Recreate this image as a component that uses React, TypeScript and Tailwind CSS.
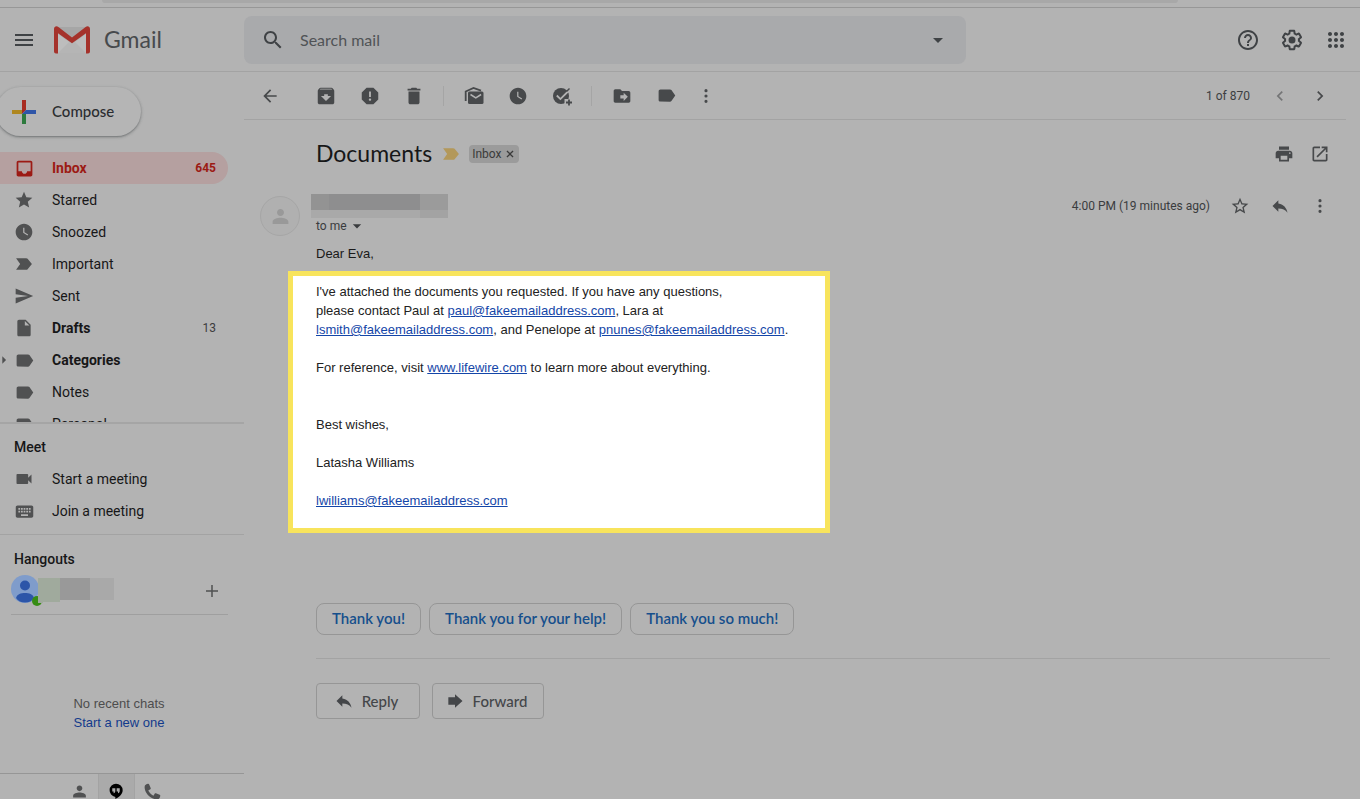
import React from 'react';

// 24x24 glyphs, all drawn with currentColor
const ICONS = {
  menu: 'M3 18h18v-2H3v2zm0-5h18v-2H3v2zm0-7v2h18V6H3z',
  search: 'M15.5 14h-.79l-.28-.27C15.41 12.59 16 11.11 16 9.5 16 5.91 13.09 3 9.5 3S3 5.91 3 9.5 5.91 16 9.5 16c1.61 0 3.09-.59 4.23-1.57l.27.28v.79l5 4.99L20.49 19l-4.99-5zm-6 0C7.01 14 5 11.99 5 9.5S7.01 5 9.5 5 14 7.01 14 9.5 11.99 14 9.5 14z',
  dropDown: 'M7 10l5 5 5-5z',
  help: 'M11 18h2v-2h-2v2zm1-16C6.48 2 2 6.48 2 12s4.48 10 10 10 10-4.48 10-10S17.52 2 12 2zm0 18c-4.41 0-8-3.59-8-8s3.59-8 8-8 8 3.59 8 8-3.59 8-8 8zm0-14c-2.21 0-4 1.79-4 4h2c0-1.1.9-2 2-2s2 .9 2 2c0 2-3 1.75-3 5h2c0-2.25 3-2.5 3-5 0-2.21-1.79-4-4-4z',
  settings: 'M13.85 22.25h-3.7c-.74 0-1.36-.54-1.45-1.27l-.27-1.89c-.27-.14-.53-.29-.79-.46l-1.8.72c-.7.26-1.47-.03-1.81-.65L2.2 15.53c-.35-.66-.2-1.44.36-1.88l1.53-1.19c-.01-.15-.02-.3-.02-.46 0-.15.01-.31.02-.46l-1.52-1.19c-.59-.45-.74-1.26-.37-1.88l1.85-3.19c.34-.62 1.11-.9 1.79-.63l1.81.73c.26-.17.52-.32.78-.46l.27-1.91c.09-.7.71-1.25 1.44-1.25h3.7c.74 0 1.36.54 1.45 1.27l.27 1.89c.27.14.53.29.79.46l1.8-.72c.71-.26 1.48.03 1.82.65l1.84 3.18c.36.66.2 1.44-.36 1.88l-1.52 1.19c.01.15.02.3.02.46s-.01.31-.02.46l1.52 1.19c.56.45.72 1.23.37 1.86l-1.86 3.22c-.34.62-1.11.9-1.8.63l-1.8-.72c-.26.17-.52.32-.78.46l-.27 1.91c-.1.68-.72 1.22-1.46 1.22zm-3.23-2h2.76l.37-2.55.53-.22c.44-.18.88-.44 1.34-.78l.45-.34 2.38.96 1.38-2.4-2.03-1.58.07-.56c.03-.26.06-.51.06-.78s-.03-.53-.06-.78l-.07-.56 2.03-1.58-1.39-2.4-2.39.96-.45-.35c-.42-.32-.87-.58-1.33-.77l-.52-.22-.37-2.55h-2.76l-.37 2.55-.53.21c-.44.19-.88.44-1.34.79l-.45.33-2.38-.95-1.39 2.39 2.03 1.58-.07.56a7 7 0 0 0-.06.79c0 .26.02.53.06.78l.07.56-2.03 1.58 1.38 2.4 2.39-.96.45.35c.43.33.86.58 1.33.77l.53.22.38 2.55zM12 8.5a3.5 3.5 0 1 1 0 7 3.5 3.5 0 0 1 0-7z',
  apps: 'M6 8c1.1 0 2-.9 2-2s-.9-2-2-2-2 .9-2 2 .9 2 2 2zm6 12c1.1 0 2-.9 2-2s-.9-2-2-2-2 .9-2 2 .9 2 2 2zm-6 0c1.1 0 2-.9 2-2s-.9-2-2-2-2 .9-2 2 .9 2 2 2zm0-6c1.1 0 2-.9 2-2s-.9-2-2-2-2 .9-2 2 .9 2 2 2zm6 0c1.1 0 2-.9 2-2s-.9-2-2-2-2 .9-2 2 .9 2 2 2zm4-8c0 1.1.9 2 2 2s2-.9 2-2-.9-2-2-2-2 .9-2 2zm-4 2c1.1 0 2-.9 2-2s-.9-2-2-2-2 .9-2 2 .9 2 2 2zm6 6c1.1 0 2-.9 2-2s-.9-2-2-2-2 .9-2 2 .9 2 2 2zm0 6c1.1 0 2-.9 2-2s-.9-2-2-2-2 .9-2 2 .9 2 2 2z',
  back: 'M20 11H7.83l5.59-5.59L12 4l-8 8 8 8 1.41-1.41L7.83 13H20v-2z',
  archive: 'M20.54 5.23l-1.39-1.68C18.88 3.21 18.47 3 18 3H6c-.47 0-.88.21-1.16.55L3.46 5.23C3.17 5.57 3 6.02 3 6.5V19c0 1.1.9 2 2 2h14c1.1 0 2-.9 2-2V6.5c0-.48-.17-.93-.46-1.27zM12 17.5L6.5 12H10v-2h4v2h3.5L12 17.5zM5.12 5l.81-1h12l.94 1H5.12z',
  report: 'M15.73 3H8.27L3 8.27v7.46L8.27 21h7.46L21 15.73V8.27L15.73 3zM12 17.3c-.72 0-1.3-.58-1.3-1.3s.58-1.3 1.3-1.3 1.3.58 1.3 1.3-.58 1.3-1.3 1.3zm1-4.3h-2V7h2v6z',
  trash: 'M6 19c0 1.1.9 2 2 2h8c1.1 0 2-.9 2-2V7H6v12zM19 4h-3.5l-1-1h-5l-1 1H5v2h14V4z',
  clock: 'M12 2C6.5 2 2 6.5 2 12s4.5 10 10 10 10-4.5 10-10S17.5 2 12 2zm4.2 14.2L11 13V7h1.5v5.2l4.5 2.7-.8 1.3z',
  moveTo: 'M20 6h-8l-2-2H4c-1.1 0-1.99.9-1.99 2L2 18c0 1.1.9 2 2 2h16c1.1 0 2-.9 2-2V8c0-1.1-.9-2-2-2zm-6 12v-3h-4v-4h4V8l5 5-5 5z',
  label: 'M17.63 5.84C17.27 5.33 16.67 5 16 5L5 5.01C3.9 5.01 3 5.9 3 7v10c0 1.1.9 1.99 2 1.99L16 19c.67 0 1.27-.33 1.63-.84L22 12l-4.37-6.16z',
  more: 'M12 7.500a1.900 1.900 0 1 0 0-3.800 1.900 1.900 0 0 0 0 3.800zm0 6.400a1.900 1.900 0 1 0 0-3.800 1.900 1.900 0 0 0 0 3.800zm0 6.400a1.900 1.900 0 1 0 0-3.800 1.900 1.900 0 0 0 0 3.800z',
  prev: 'M15.41 7.41L14 6l-6 6 6 6 1.41-1.41L10.83 12z',
  next: 'M10 6L8.59 7.41 13.17 12l-4.58 4.59L10 18l6-6z',
  inbox: 'M19 3H4.99c-1.11 0-1.98.89-1.98 2L3 19c0 1.1.88 2 1.99 2H19c1.1 0 2-.9 2-2V5c0-1.11-.9-2-2-2zm0 12h-4c0 1.66-1.35 3-3 3s-3-1.34-3-3H4.99V5H19v10z',
  star: 'M12 17.27L18.18 21l-1.64-7.03L22 9.24l-7.19-.61L12 2 9.19 8.63 2 9.24l5.46 4.73L5.82 21z',
  starOutline: 'M22 9.24l-7.19-.62L12 2 9.19 8.63 2 9.24l5.46 4.73L5.82 21 12 17.27 18.18 21l-1.63-7.03L22 9.24zM12 15.4l-3.76 2.27 1-4.28-3.32-2.88 4.38-.38L12 6.1l1.71 4.04 4.38.38-3.32 2.88 1 4.28L12 15.4z',
  important: 'M2.5 19h12.2c.7 0 1.3-.33 1.65-.84L21.5 12l-5.15-6.16C16 5.33 15.4 5 14.7 5H2.5l4.9 7z',
  send: 'M2.01 21L23 12 2.01 3 2 10l15 2-15 2z',
  draft: 'M6 2c-1.1 0-1.99.9-1.99 2L4 20c0 1.1.89 2 1.99 2H18c1.1 0 2-.9 2-2V8l-6-6H6zm7 7V3.5L18.5 9H13z',
  camera: 'M17 10.5V7c0-.55-.45-1-1-1H4c-.55 0-1 .45-1 1v10c0 .55.45 1 1 1h12c.55 0 1-.45 1-1v-3.5l4 4v-11l-4 4z',
  keyboard: 'M20 5H4c-1.1 0-1.99.9-1.99 2L2 17c0 1.1.9 2 2 2h16c1.1 0 2-.9 2-2V7c0-1.1-.9-2-2-2zm-9 3h2v2h-2V8zm0 3h2v2h-2v-2zM8 8h2v2H8V8zm0 3h2v2H8v-2zm-1 2H5v-2h2v2zm0-3H5V8h2v2zm9 7H8v-2h8v2zm0-4h-2v-2h2v2zm0-3h-2V8h2v2zm3 3h-2v-2h2v2zm0-3h-2V8h2v2z',
  add: 'M20 13h-7v7h-2v-7H4v-2h7V4h2v7h7v2z',
  person: 'M12 11.500c2.210 0 4-1.790 4-4s-1.790-4-4-4-4 1.790-4 4 1.790 4 4 4zm0 2c-3.500 0-9 1.500-9 4.500v2.500h18V18c0-3-5.500-4.500-9-4.500z',
  phone: 'M6.620 10.790c1.440 2.830 3.760 5.140 6.590 6.590l1.700-2.700c.4-.5.9-.6 1.400-.4l4.700 1.900c.6.300.9.700.8 1.400-.3 2-1.500 4.400-4 4.400C9.900 22 2 14.100 2 6.200 2 3.700 4.400 2.500 6.400 2.200c.7-.1 1.100.200 1.400.8l1.900 4.700c.2.500.1 1-.4 1.400z',
  hangouts: 'M12 1a10 10 0 0 0-1 19.900V24c5.500-2.600 11-7.200 11-13A10 10 0 0 0 12 1zM11 11.500c0 2.200-1 3.600-2.600 4v-2.700h-2V7.800H11zm6.600 0c0 2.200-1 3.600-2.600 4v-2.700h-2V7.800h4.600z',
  print: 'M19 8H5c-1.66 0-3 1.34-3 3v6h4v4h12v-4h4v-6c0-1.66-1.34-3-3-3zm-3 11H8v-5h8v5zm3-7c-.55 0-1-.45-1-1s.45-1 1-1 1 .45 1 1-.45 1-1 1zm-1-9H6v4h12V3z',
  openNew: 'M19 19H5V5h7V3H5c-1.11 0-2 .9-2 2v14c0 1.1.89 2 2 2h14c1.1 0 2-.9 2-2v-7h-2v7zM14 3v2h3.59l-9.83 9.83 1.41 1.41L19 6.41V10h2V3h-7z',
  reply: 'M10 9V5l-7 7 7 7v-4.1c5 0 8.5 1.6 11 5.1-1-5-4-10-11-11z',
  forward: 'M12 7.500V4l9 8-9 8v-3.500H4v-9z',
  close: 'M19 6.8L17.2 5 12 10.2 6.8 5 5 6.8l5.2 5.2L5 17.2 6.8 19l5.2-5.2 5.2 5.2 1.8-1.8-5.2-5.2z',
  caretRight: 'M8 3l9 9-9 9z',
};

type IconName = keyof typeof ICONS;

const Icon = ({ name, size = 20, className = '' }: { name: IconName; size?: number; className?: string }) => (
  <svg width={size} height={size} viewBox="0 0 24 24" fill="currentColor" fillRule="evenodd" className={`shrink-0 ${className}`} aria-hidden="true">
    <path d={ICONS[name]} />
  </svg>
);

const GmailLogo = () => (
  <svg width="36" height="28" viewBox="0 0 36 28" aria-hidden="true">
    <rect x="1" y="1" width="34" height="26" rx="2" fill="#b0b0b0" />
    <path d="M4 27V8l14 10L32 8v19z" fill="#bdbdbd" />
    <path d="M4 27l11-11 3 2 3-2 11 11z" fill="#b5b5b5" />
    <path d="M4 1h28L18 13z" fill="#a6a6a6" />
    <path d="M0 3C0 .5 2.5-.4 4.4 1L18 11.400 31.600 1C33.500-.4 36 .5 36 3v22.500a2 2 0 0 1-2 2h-2V7.200L18 17.300 4 7.200v20.300H2a2 2 0 0 1-2-2z" fill="#a5322b" />
  </svg>
);

const ComposePlus = () => (
  <svg width="24" height="24" viewBox="0 0 24 24" aria-hidden="true">
    <path d="M10 0h4v10h-4z" fill="#a82b20" />
    <path d="M0 10h10v4H0z" fill="#af8720" />
    <path d="M14 10h10v4H14z" fill="#2f56a8" />
    <path d="M10 14h4v10h-4z" fill="#2d7a3d" />
    <path d="M10 10h4l-4 4z" fill="#a82b20" />
    <path d="M14 10v4h-4z" fill="#2f56a8" />
  </svg>
);

const MarkUnreadIcon = () => (
  <svg width="20" height="20" viewBox="0 0 20 20" fill="none" aria-hidden="true">
    <path d="M1.700 15V5.500L9.500 2 17 4.600" stroke="currentColor" strokeWidth="1.800" />
    <rect x="4" y="5.500" width="15.500" height="12.500" rx="1.500" fill="currentColor" />
    <path d="M6.500 8.500l5.300 3.300 5.300-3.300" stroke="#b3b3b3" strokeWidth="1.500" />
  </svg>
);

const AddTaskIcon = () => (
  <svg width="20" height="20" viewBox="0 0 20 20" fill="none" aria-hidden="true">
    <circle cx="9" cy="10" r="8" fill="currentColor" />
    <path d="M4.800 9.500l3.600 3.600L17 4.500" stroke="#b3b3b3" strokeWidth="1.800" />
    <path d="M14.500 5.500l3-3" stroke="currentColor" strokeWidth="1.500" />
    <path d="M12.500 13h7v7h-7z" fill="#b3b3b3" />
    <path d="M17 13.500v6M14 16.500h6" stroke="currentColor" strokeWidth="1.800" />
  </svg>
);

const HangoutsAvatar = () => (
  <svg width="32" height="32" viewBox="0 0 32 32" aria-hidden="true">
    <circle cx="14" cy="14" r="14" fill="#7f9ccb" />
    <circle cx="14" cy="10.500" r="5" fill="#2c55a8" />
    <path d="M5 23c1-4 5-5 9-5s8 1 9 5c-2 3-5 4.500-9 4.500S7 26 5 23z" fill="#2c55a8" />
    <circle cx="26" cy="26" r="5" fill="#368c14" />
    <path d="M27 20h5v8h-5z" fill="#a0aa9d" />
  </svg>
);

interface IconButtonProps {
  label: string;
  className?: string;
  children: React.ReactNode;
}

const IconButton = ({ label, className = 'h-10 w-11', children }: IconButtonProps) => (
  <button type="button" aria-label={label} className={`flex shrink-0 items-center justify-center ${className}`}>
    {children}
  </button>
);

interface Folder {
  name: string;
  icon: IconName;
  size: number;
  count?: string;
  active?: boolean;
  bold?: boolean;
  expandable?: boolean;
}

const FOLDERS: Folder[] = [
  { name: 'Inbox', icon: 'inbox', size: 21, count: '645', active: true },
  { name: 'Starred', icon: 'star', size: 20 },
  { name: 'Snoozed', icon: 'clock', size: 20 },
  { name: 'Important', icon: 'important', size: 20 },
  { name: 'Sent', icon: 'send', size: 20 },
  { name: 'Drafts', icon: 'draft', size: 20, count: '13', bold: true },
  { name: 'Categories', icon: 'label', size: 21, bold: true, expandable: true },
  { name: 'Notes', icon: 'label', size: 21 },
  { name: 'Personal', icon: 'label', size: 21 },
];

const FolderRow = ({ folder }: { folder: Folder }) => {
  const tone = folder.active
    ? 'bg-[#b5a0a0] font-bold text-[#9c1a14]'
    : folder.bold
      ? 'font-bold text-[#171718]'
      : 'text-[#171718]';

  return (
    <a href="#" className={`relative flex h-8 items-center rounded-r-full pr-3 text-sm ${tone}`}>
      {folder.expandable && <Icon name="caretRight" size={10} className="absolute -left-px text-[#505152]" />}
      <span className={`flex w-13 items-center pl-3.5 ${folder.active ? '' : 'text-[#505152]'}`}>
        <Icon name={folder.icon} size={folder.size} />
      </span>
      <span className="flex-1">{folder.name}</span>
      {folder.count && <span className={`text-xs ${folder.active ? '' : 'font-normal text-[#3c3c3d]'}`}>{folder.count}</span>}
    </a>
  );
};

const Header = () => (
  <header className="flex h-16 shrink-0 items-center border-b border-[#a3a3a3]">
    <div className="flex w-61 shrink-0 items-center">
      <IconButton label="Main menu" className="h-12 w-12 text-[#3f4245]">
        <Icon name="menu" size={24} />
      </IconButton>
      <a href="#" className="flex items-center gap-3.5 pl-1.5 font-['Lato',sans-serif] text-[23px] text-[#474a4d]">
        <GmailLogo />
        Gmail
      </a>
    </div>
    <form className="flex h-12 max-w-[722px] flex-1 items-center rounded-lg bg-[#a9aaac]">
      <IconButton label="Search" className="h-12 w-14 pl-0.5 text-[#3f4245]">
        <Icon name="search" size={24} />
      </IconButton>
      <input
        type="text"
        aria-label="Search mail"
        placeholder="Search mail"
        className="min-w-0 flex-1 bg-transparent font-['Lato',sans-serif] text-base text-[#3f4245] outline-none placeholder:text-[#505356]"
      />
      <IconButton label="Show search options" className="h-12 w-14 text-[#3f4245]">
        <Icon name="dropDown" size={24} />
      </IconButton>
    </form>
    <div className="ml-auto flex shrink-0 pr-0.5 text-[#3f4245]">
      <IconButton label="Support">
        <Icon name="help" size={24} />
      </IconButton>
      <IconButton label="Settings">
        <Icon name="settings" size={24} />
      </IconButton>
      <IconButton label="Google apps">
        <Icon name="apps" size={24} />
      </IconButton>
    </div>
  </header>
);

const Sidebar = () => (
  <aside className="flex w-61 shrink-0 flex-col">
    <div className="pt-[15px] pb-4">
      <button
        type="button"
        className="-ml-1 flex h-[49px] w-[145px] items-center gap-4 rounded-full bg-[#b5b5b5] pl-4 font-['Lato',sans-serif] text-[15px] font-medium text-[#2b2d30] shadow-[0_1px_2px_rgba(60,64,67,0.45),0_1px_3px_1px_rgba(60,64,67,0.12)]"
      >
        <ComposePlus />
        Compose
      </button>
    </div>

    <nav className="h-[270px] shrink-0 overflow-hidden pr-4">
      {FOLDERS.map((folder) => (
        <FolderRow key={folder.name} folder={folder} />
      ))}
    </nav>

    <section className="border-t-2 border-[#a5a5a5] pt-[7px] pb-[7px] text-[#171718]">
      <h2 className="flex h-8 items-center pl-3.5 text-sm font-medium">Meet</h2>
      <a href="#" className="flex h-8 items-center text-sm">
        <span className="w-13 pl-3.5 text-[#505152]"><Icon name="camera" /></span>
        Start a meeting
      </a>
      <a href="#" className="flex h-8 items-center text-sm">
        <span className="w-13 pl-3.5 text-[#505152]"><Icon name="keyboard" size={21} /></span>
        Join a meeting
      </a>
    </section>

    <section className="flex flex-1 flex-col border-t border-[#a3a3a3] pt-2">
      <h2 className="flex h-8 items-center pl-3.5 text-sm font-medium text-[#171718]">Hangouts</h2>
      <div className="mr-4 ml-[11px] flex h-10 items-start border-b border-[#9f9f9f]">
        <HangoutsAvatar />
        <div className="-ml-[5px] flex pt-[3px]">
          <span className="h-6 w-[22px] bg-[#a0aa9d]" />
          <span className="h-[22px] w-[30px] bg-[#999]" />
          <span className="h-[22px] w-6 bg-[#a9a9a9]" />
        </div>
        <IconButton label="New conversation" className="ml-auto h-8 w-8 text-[#505152]">
          <Icon name="add" size={18} />
        </IconButton>
      </div>
      <div className="flex flex-1 flex-col items-center justify-center pt-[38px] pr-1.5 font-['Liberation_Sans',Arial,sans-serif] text-[13px] leading-[19px]">
        <p className="text-[#4d4d4d]">No recent chats</p>
        <a href="#" className="text-[#123a8c]">Start a new one</a>
      </div>
    </section>

    <div className="flex h-[26px] shrink-0 items-start justify-center overflow-hidden border-t border-[#969696] pr-3 text-[#505152]">
      <IconButton label="Contacts" className="h-[34px] w-9">
        <Icon name="person" size={17} />
      </IconButton>
      <IconButton label="Hangouts conversations" className="h-[34px] w-[37px] border-x border-[#a3a3a3] bg-[#aaa] text-black">
        <Icon name="hangouts" size={16} />
      </IconButton>
      <IconButton label="Phone calls" className="h-[34px] w-9">
        <Icon name="phone" size={19} />
      </IconButton>
    </div>
  </aside>
);

const Separator = () => <span className="mr-2 ml-[7px] h-5 w-px bg-[#a5a5a5]" />;

const Toolbar = () => (
  <div className="mr-3.5 flex h-12 shrink-0 items-center border-b border-[#a3a3a3] pr-1.5 pl-1 text-[#47494b]">
    <IconButton label="Back to Inbox" className="mr-3 h-10 w-11">
      <Icon name="back" />
    </IconButton>
    <IconButton label="Archive">
      <Icon name="archive" size={22} />
    </IconButton>
    <IconButton label="Report spam">
      <Icon name="report" size={22} />
    </IconButton>
    <IconButton label="Delete">
      <Icon name="trash" size={22} />
    </IconButton>
    <Separator />
    <IconButton label="Mark as unread">
      <MarkUnreadIcon />
    </IconButton>
    <IconButton label="Snooze">
      <Icon name="clock" />
    </IconButton>
    <IconButton label="Add to Tasks">
      <AddTaskIcon />
    </IconButton>
    <Separator />
    <IconButton label="Move to">
      <Icon name="moveTo" />
    </IconButton>
    <IconButton label="Labels">
      <Icon name="label" size={21} />
    </IconButton>
    <IconButton label="More" className="h-10 w-9">
      <Icon name="more" />
    </IconButton>
    <span className="mr-2.5 ml-auto text-xs text-[#3c3e41]">1 of 870</span>
    <IconButton label="Newer" className="h-10 w-10 text-[#747576]">
      <Icon name="prev" />
    </IconButton>
    <IconButton label="Older" className="h-10 w-10">
      <Icon name="next" />
    </IconButton>
  </div>
);

const MailLink = ({ children }: { children: string }) => (
  <a href="#" className="text-[#1446a8] underline">{children}</a>
);

const MessageBody = () => (
  <div className="font-['Liberation_Sans',Arial,sans-serif] text-[13px] leading-[19px] text-[#1a1a1a]">
    <p>Dear Eva,</p>
    <div className="mt-2 -ml-7 flex w-[542px] max-w-full flex-col gap-[19px] border-[5px] border-[#f8e45c] bg-white pt-1.5 pr-6 pb-[18px] pl-[23px] text-[#222]">
      <p>
        I've attached the documents you requested. If you have any questions,
        <br />
        please contact Paul at <MailLink>paul@fakeemailaddress.com</MailLink>, Lara at
        <br />
        <MailLink>lsmith@fakeemailaddress.com</MailLink>, and Penelope at <MailLink>pnunes@fakeemailaddress.com</MailLink>.
      </p>
      <p className="mb-[19px]">
        For reference, visit <MailLink>www.lifewire.com</MailLink> to learn more about everything.
      </p>
      <p>Best wishes,</p>
      <p>Latasha Williams</p>
      <p><MailLink>lwilliams@fakeemailaddress.com</MailLink></p>
    </div>
  </div>
);

const SMART_REPLIES = ['Thank you!', 'Thank you for your help!', 'Thank you so much!'];

const Message = () => (
  <article className="pl-4">
    <div className="flex h-[68px] items-center pl-14">
      <h1 className="pb-0.5 font-['Lato',sans-serif] text-[23px] text-[#171718]">Documents</h1>
      <Icon name="important" className="ml-[9px] text-[#b3985a]" />
      <span className="ml-2 flex h-[18px] items-center gap-[3px] rounded bg-[#9b9b9b] px-[3px] text-xs text-[#3a3a3a]">
        Inbox
        <button type="button" aria-label="Remove label Inbox">
          <Icon name="close" size={12} />
        </button>
      </span>
      <div className="mr-[22px] ml-auto flex text-[#47494b]">
        <IconButton label="Print all" className="h-10 w-9">
          <Icon name="print" />
        </IconButton>
        <IconButton label="In new window" className="h-10 w-9">
          <Icon name="openNew" />
        </IconButton>
      </div>
    </div>

    <div className="flex h-14 items-start pt-1.5">
      <span className="mt-0.5 flex size-10 items-center justify-center rounded-full border border-[#a6a6a6] bg-[#b0b0b0] text-[#999]">
        <Icon name="person" size={21} />
      </span>
      <div className="ml-[11px]">
        <div className="flex">
          <span className="h-4 w-[18px] bg-[#939393]" />
          <span className="h-4 w-[91px] bg-[#8e8e8f]" />
          <span className="h-4 w-7 bg-[#9b9b9b]" />
        </div>
        <div className="flex">
          <span className="h-2 w-[109px] bg-[#a9a9a9]" />
          <span className="h-2 w-7 bg-[#a3a3a3]" />
        </div>
        <button type="button" className="flex h-4 items-center pl-[5px] text-xs text-[#3a3c3e]">
          to me
          <Icon name="dropDown" />
        </button>
      </div>
      <div className="-mt-2 mr-5 ml-auto flex items-center text-[#47494b]">
        <time className="mr-2.5 text-xs text-[#3a3c3e]">4:00 PM (19 minutes ago)</time>
        <IconButton label="Star" className="h-10 w-10">
          <Icon name="starOutline" />
        </IconButton>
        <IconButton label="Reply" className="h-10 w-10">
          <Icon name="reply" />
        </IconButton>
        <IconButton label="More message options" className="h-10 w-10">
          <Icon name="more" />
        </IconButton>
      </div>
    </div>

    <div className="pl-14">
      <MessageBody />

      <div className="mt-[70px] mr-[30px] flex flex-wrap gap-2 border-b border-[#a3a3a3] pb-[23px]">
        {SMART_REPLIES.map((reply) => (
          <button
            key={reply}
            type="button"
            className="h-8 rounded-lg border border-[#969696] px-[15px] pb-0.5 font-['Lato',sans-serif] text-[15px] font-semibold text-[#164f8c]"
          >
            {reply}
          </button>
        ))}
      </div>

      <div className="mt-6 flex gap-3 font-['Lato',sans-serif] text-[15px] font-medium text-[#444649]">
        <button type="button" className="flex h-9 w-[104px] items-center justify-center gap-2 rounded border border-[#969696] pr-1">
          <Icon name="reply" />
          Reply
        </button>
        <button type="button" className="flex h-9 w-28 items-center justify-center gap-2 rounded border border-[#969696] pr-1">
          <Icon name="forward" />
          Forward
        </button>
      </div>
    </div>
  </article>
);

const App: React.FC = () => (
  <div className="flex h-screen flex-col overflow-hidden bg-[#b3b3b3] font-['Roboto',sans-serif]">
    {/* bottom edge of the browser's address bar */}
    <div className="h-2 shrink-0 border-b border-[#979797] pr-[182px] pl-[102px]">
      <div className="h-[3px] rounded-b-full bg-[#a8a8a8]" />
    </div>
    <Header />
    <div className="flex min-h-0 flex-1">
      <Sidebar />
      <main className="flex min-w-0 flex-1 flex-col">
        <Toolbar />
        <Message />
      </main>
    </div>
  </div>
);

export default App;
